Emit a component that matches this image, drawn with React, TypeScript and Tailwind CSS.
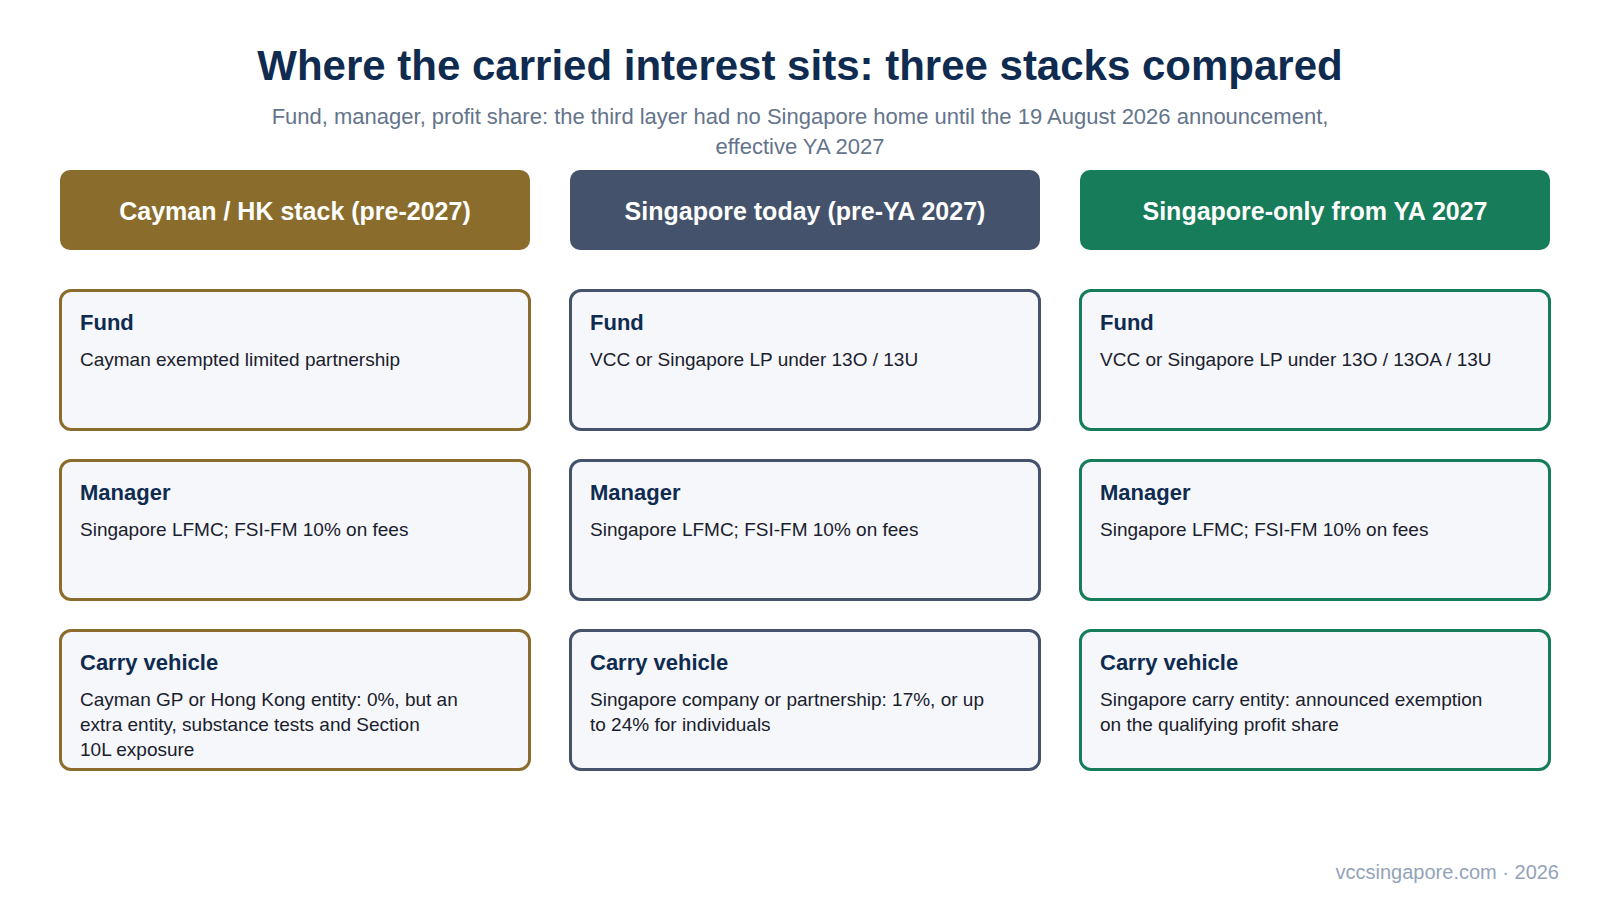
const stacks = [
  {
    name: 'Cayman / HK stack (pre-2027)',
    head: 'bg-[#8a6d2c]',
    border: 'border-[#8a6d2c]',
    layers: [
      { title: 'Fund', lines: ['Cayman exempted limited partnership'] },
      { title: 'Manager', lines: ['Singapore LFMC; FSI-FM 10% on fees'] },
      {
        title: 'Carry vehicle',
        lines: [
          'Cayman GP or Hong Kong entity: 0%, but an',
          'extra entity, substance tests and Section',
          '10L exposure',
        ],
      },
    ],
  },
  {
    name: 'Singapore today (pre-YA 2027)',
    head: 'bg-[#44526b]',
    border: 'border-[#44526b]',
    layers: [
      { title: 'Fund', lines: ['VCC or Singapore LP under 13O / 13U'] },
      { title: 'Manager', lines: ['Singapore LFMC; FSI-FM 10% on fees'] },
      {
        title: 'Carry vehicle',
        lines: ['Singapore company or partnership: 17%, or up', 'to 24% for individuals'],
      },
    ],
  },
  {
    name: 'Singapore-only from YA 2027',
    head: 'bg-[#177c5a]',
    border: 'border-[#177c5a]',
    layers: [
      { title: 'Fund', lines: ['VCC or Singapore LP under 13O / 13OA / 13U'] },
      { title: 'Manager', lines: ['Singapore LFMC; FSI-FM 10% on fees'] },
      {
        title: 'Carry vehicle',
        lines: ['Singapore carry entity: announced exemption', 'on the qualifying profit share'],
      },
    ],
  },
];

export default function App() {
  return (
    <div
      className="flex flex-col w-[1600px] h-[900px] bg-white overflow-hidden"
      style={{ fontFamily: '"Liberation Sans", Arial, sans-serif' }}
    >
      {/* Heading */}
      <h1 className="pt-[43px] text-center text-[42px] leading-[46px] font-bold text-[#0f2b50]">
        Where the carried interest sits: three stacks compared
      </h1>
      <p className="mt-[13px] text-center text-[22px] leading-[30px] text-[#64748b]">
        Fund, manager, profit share: the third layer had no Singapore home until the 19 August 2026 announcement,
        <br />
        effective YA 2027
      </p>

      {/* Stacks */}
      <div className="mt-[8px] grid grid-cols-[470px_470px_470px] gap-x-[40px] px-[60px]">
        {stacks.map((s) => (
          <div key={s.name} className="flex flex-col">
            <div
              className={`h-[80px] pt-[4px] rounded-[10px] flex items-center justify-center text-white font-bold text-[25px] ${s.head}`}
            >
              {s.name}
            </div>
            <div className="mt-[39px] flex flex-col gap-[28px]">
              {s.layers.map((l) => (
                <div
                  key={l.title}
                  className={`mx-[-1px] h-[142px] rounded-[12px] border-[3px] bg-[#f5f7fb] pl-[18px] pr-4 pt-[17px] ${s.border}`}
                >
                  <div className="text-[22px] leading-[28px] font-bold text-[#0f2b50]">{l.title}</div>
                  <div className="mt-[10px] text-[19px] leading-[25px] text-[#1a202c]">
                    {l.lines.map((line) => (
                      <div key={line}>{line}</div>
                    ))}
                  </div>
                </div>
              ))}
            </div>
          </div>
        ))}
      </div>

      {/* Footer */}
      <div className="mt-auto pb-[16px] pr-[41px] text-right text-[20px] leading-[24px] text-[#94a3b8]">
        vccsingapore.com · 2026
      </div>
    </div>
  );
}
